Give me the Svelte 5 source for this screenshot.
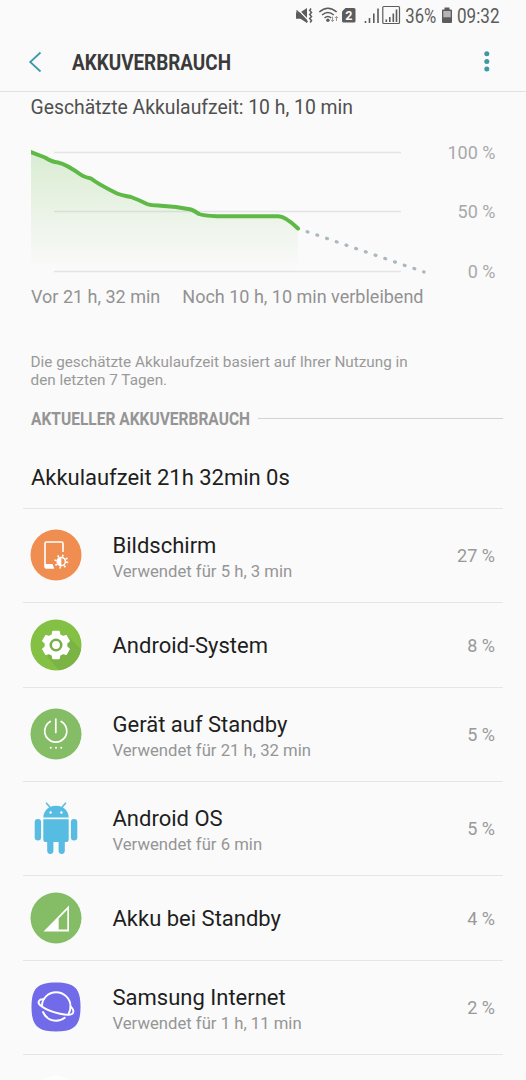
<script lang="ts">
    const CHART_LEFT = 30;
    const CHART_TOP = 22;

    const levels = [
        { label: '100 %', y: 22.5 },
        { label: '50 %', y: 81.5 },
        { label: '0 %', y: 141.5 }
    ];

    const history = 'M31 22 L45 27.5 Q52 32 58 32.5 Q66 34 82 45.5 Q86 47.5 91 48.5 Q98 54 116 63 Q120 65 131 67 Q139 70 147 74 Q151 75.5 158 75.5 L176 77 L191 79.5 Q194 80.5 199 84 Q203 85.5 217 86.3 L278 86.3 Q285 86 298 98.5';

    const apps = [
        { icon: 'display', name: 'Bildschirm', usage: 'Verwendet für 5 h, 3 min', percent: 27 },
        { icon: 'system', name: 'Android-System', usage: '', percent: 8 },
        { icon: 'power', name: 'Gerät auf Standby', usage: 'Verwendet für 21 h, 32 min', percent: 5 },
        { icon: 'android', name: 'Android OS', usage: 'Verwendet für 6 min', percent: 5 },
        { icon: 'signal', name: 'Akku bei Standby', usage: '', percent: 4 },
        { icon: 'internet', name: 'Samsung Internet', usage: 'Verwendet für 1 h, 11 min', percent: 2 }
    ];

    // six teeth, four outline points each
    function gearPoints(cx: number, cy: number, outer: number, inner: number) {
        const points: string[] = [];
        for (let i = 0; i < 6; i++) {
            const base = i * 60 - 90;
            for (const [offset, r] of [[-20, inner], [-13, outer], [13, outer], [20, inner]]) {
                const a = ((base + offset) * Math.PI) / 180;
                points.push(`${(cx + r * Math.cos(a)).toFixed(2)},${(cy + r * Math.sin(a)).toFixed(2)}`);
            }
        }
        return points.join(' ');
    }
</script>

<div class="screen">
    <div class="status-bar">
        <svg width="526" height="32" viewBox="0 0 526 32">
            <path d="M296 12.300h4.500l6.500-4.300v15l-6.500-4.300h-4.500z" fill="#5c5c5c" />
            <path d="M298 9.500l11 11.500" stroke="#fafafa" stroke-width="1.200" />
            <path d="M296.500 10.500l11 11.500" stroke="#5c5c5c" stroke-width="1.500" />
            <path d="M311 8.500l-1.300 2 1.800 2-1.800 2 1.800 2-1.800 2 1.800 2-1.300 2" fill="none" stroke="#5c5c5c" stroke-width="1.500" />
            <path d="M319.300 12Q327.900 4.500 336.700 12M322 15Q327.900 10 333.800 15M324.500 18Q327.900 15 331.200 18" fill="none" stroke="#5c5c5c" stroke-width="1.600" />
            <circle cx="327.900" cy="20.200" r="1.700" fill="#5c5c5c" />
            <path d="M332.500 16.500v5M330.800 19.800l1.700 1.700 1.700-1.700M336.500 21v-4.500M335 18l1.500-1.600 1.500 1.600" fill="none" stroke="#999" stroke-width="1" />
            <path d="M345.500 8H354q1.500 0 1.500 1.500v11.500q0 1.500-1.500 1.500h-10.500q-1.500 0-1.500-1.500v-9.500z" fill="#5c5c5c" />
            <text x="345.200" y="20" font-size="12.500" font-weight="700" fill="#fafafa">2</text>
            <path d="M365.500 21v2M369.500 18v5M373.800 13.500v9.500M378 8.500v14.500" stroke="#5c5c5c" stroke-width="1.600" />
            <rect x="382.800" y="6.500" width="16.700" height="17" rx="1" fill="none" stroke="#5c5c5c" stroke-width="1.200" />
            <path d="M386.300 19.500v2.500M389.800 17v5M393.300 13.500v8.500M396.500 9.500v12.500" stroke="#5c5c5c" stroke-width="1.600" />
            <text x="405.300" y="23" font-size="19.500" textLength="31" lengthAdjust="spacingAndGlyphs" fill="#5c5c5c">36%</text>
            <path d="M444.500 7.500h5v2h1.500q1 0 1 1v11.500q0 1-1 1h-8q-1 0-1-1v-11.500q0-1 1-1h1.500z" fill="#5c5c5c" />
            <path d="M443.300 11h7.400v6.300h-7.400z" fill="#b5b5b5" />
            <text x="457" y="23" font-size="19.500" textLength="42.500" lengthAdjust="spacingAndGlyphs" fill="#5c5c5c">09:32</text>
        </svg>
    </div>

    <header>
        <svg class="back" width="14" height="22" viewBox="0 0 14 22">
            <path d="M12.500 1.500L2.200 11l10.300 9.500" fill="none" stroke="#4198ad" stroke-width="1.800" />
        </svg>
        <svg class="title" width="230" height="30" viewBox="0 0 230 30" role="heading" aria-level="1">
            <text x="0" y="23" font-size="22" font-weight="700" textLength="159" lengthAdjust="spacingAndGlyphs" fill="#3a3a3a">AKKUVERBRAUCH</text>
        </svg>
        <svg class="more" width="6" height="22" viewBox="0 0 6 22">
            <g fill="#3f98a3">
                <circle cx="2.800" cy="2.700" r="2.500" />
                <circle cx="2.800" cy="10.400" r="2.500" />
                <circle cx="2.800" cy="18.100" r="2.500" />
            </g>
        </svg>
    </header>

    <section class="estimate">
        <p class="remaining">Geschätzte Akkulaufzeit: 10 h, 10 min</p>
        <svg class="chart" width="526" height="155" viewBox="0 0 526 155">
            <defs>
                <linearGradient id="fade" x1="0" y1={CHART_TOP} x2="0" y2="139" gradientUnits="userSpaceOnUse">
                    <stop offset="0" stop-color="#66bb44" stop-opacity="0.220" />
                    <stop offset="1" stop-color="#66bb44" stop-opacity="0" />
                </linearGradient>
                <clipPath id="plot"><rect x={CHART_LEFT + 1} y="0" width="400" height="155" /></clipPath>
            </defs>
            {#each levels as level}
                <path d="M54 {level.y}H401" stroke="#e4e4e4" stroke-width="1.300" />
                <text x="495.500" y={level.y + 6.5} text-anchor="end" font-size="18" fill="#a9a9a9">{level.label}</text>
            {/each}
            <path d="{history}V141H31Z" fill="url(#fade)" />
            <path d={history} fill="none" stroke="#5fb947" stroke-width="4" stroke-linecap="round" stroke-linejoin="round" clip-path="url(#plot)" />
            <path d="M307.200 101.700L424 142" stroke="#a9b9bf" stroke-width="3.300" stroke-linecap="round" stroke-dasharray="0.800 9.470" />
        </svg>
        <div class="range">
            <span class="past">Vor 21 h, 32 min</span>
            <span class="future">Noch 10 h, 10 min verbleibend</span>
        </div>
        <p class="hint">Die geschätzte Akkulaufzeit basiert auf Ihrer Nutzung in<br />den letzten 7 Tagen.</p>
    </section>

    <div class="section-title">
        <svg width="220" height="22" viewBox="0 0 220 22">
            <text x="0" y="17.500" font-size="17.500" font-weight="700" textLength="219" lengthAdjust="spacingAndGlyphs" fill="#959595">AKTUELLER AKKUVERBRAUCH</text>
        </svg>
        <div class="rule"></div>
    </div>

    <div class="runtime"><span>Akkulaufzeit 21h 32min 0s</span></div>

    <div class="list">
        {#each apps as app}
            <div class="row" class:single={!app.usage}>
                <svg class="icon" width="52" height="52" viewBox="0 0 52 52">
                    {#if app.icon === 'display'}
                        <circle cx="26" cy="26" r="25.500" fill="#f08d51" />
                        <path d="M33 23V14.500q0-1.500-1.500-1.500h-15q-1.500 0-1.500 1.500V37.500q0 1.500 1.500 1.500H24" fill="none" stroke="#fff" stroke-width="1.600" />
                        <path d="M15 35h7.500l1.500 4h-8q-1 0-1-1z" fill="#fff" />
                        <circle cx="31.300" cy="32.500" r="5.900" fill="none" stroke="#fff" stroke-width="2.200" stroke-dasharray="1.600 3.034" />
                        <circle cx="31.300" cy="32.500" r="4.100" fill="none" stroke="#fff" stroke-width="1.500" />
                        <path d="M31.300 28.400a4.100 4.100 0 0 0 0 8.200z" fill="#fff" />
                    {:else if app.icon === 'system'}
                        <circle cx="26" cy="26" r="25.500" fill="#83c044" />
                        <path d="M37.500 17L51 30.500A25.500 25.500 0 0 1 29 51.300L17 37.500z" fill="#7bb344" />
                        <polygon points={gearPoints(26, 26, 13.8, 10.8)} fill="#fff" stroke="#fff" stroke-width="1.400" stroke-linejoin="round" />
                        <circle cx="26" cy="26" r="5.200" fill="#fff" stroke="#78ae45" stroke-width="2.600" />
                    {:else if app.icon === 'power'}
                        <circle cx="26" cy="26" r="25.500" fill="#85bd66" />
                        <path d="M20.300 13.500A11 11 0 1 0 31.200 13.500M25.800 11v13.500" fill="none" stroke="#fff" stroke-width="1.700" stroke-linecap="round" />
                        <g fill="#fff">
                            <circle cx="20.800" cy="39.700" r="1" />
                            <circle cx="26" cy="39.700" r="1" />
                            <circle cx="31.200" cy="39.700" r="1" />
                        </g>
                    {:else if app.icon === 'android'}
                        <g fill="#56bce2">
                            <path d="M13.300 15.500C13.500 9 18 3.800 26 3.800S38.500 9 38.700 15.500z" />
                            <path d="M16.500 1.300l3.500 4M35.500 1.300l-3.500 4" stroke="#56bce2" stroke-width="1.600" stroke-linecap="round" />
                            <path d="M13.300 17.300h25.400v20.200q0 2.500-2.500 2.500H34.800v8.800a3.100 3.100 0 0 1-6.200 0V40h-5.200v8.800a3.100 3.100 0 0 1-6.200 0V40h-1.400q-2.500 0-2.500-2.500z" />
                            <rect x="4.700" y="17" width="6.400" height="21.500" rx="3.200" />
                            <rect x="40.900" y="17" width="6.400" height="21.500" rx="3.200" />
                        </g>
                        <circle cx="20.600" cy="10.500" r="1.200" fill="#fff" />
                        <circle cx="31.400" cy="10.500" r="1.200" fill="#fff" />
                    {:else if app.icon === 'signal'}
                        <circle cx="26" cy="26" r="25.500" fill="#85bd66" />
                        <path d="M13.500 39.500L39 13.500V39.500z" fill="#fff" />
                        <path d="M28.700 26.500L37.300 17.700V37.500H28.700z" fill="#85bd66" />
                    {:else}
                        <path d="M26 1.500C44.500 1.500 50.500 7.500 50.500 26S44.500 50.500 26 50.500 1.500 44.500 1.500 26 7.500 1.500 26 1.500z" fill="#716be9" />
                        <g fill="none" stroke="#fff" stroke-width="1.900" stroke-linecap="round" stroke-linejoin="round">
                            <path d="M12 24.500C12.300 17 18.500 11.300 26 11.300C34 11.300 40.500 17.500 40.500 25.500C40.500 28.500 39.800 31 38.300 33.500" />
                            <path d="M13.500 18.200C8.800 18 6.800 21.300 10.500 24.500C15 28.300 22 31 30 32.800C37.500 34.500 42.500 34.300 43.300 31.300C43.800 29.300 42.800 27.500 40.500 25.500" />
                            <path d="M13 31C15.500 36.500 20.500 39.700 26 39.700C29.500 39.700 32.500 38.700 34.800 36.800" />
                        </g>
                    {/if}
                </svg>
                <div class="info">
                    <div class="name">{app.name}</div>
                    {#if app.usage}
                        <div class="usage">{app.usage}</div>
                    {/if}
                </div>
                <div class="percent">{app.percent} %</div>
            </div>
        {/each}
    </div>
    <div class="next-row"><div class="next-icon"></div></div>
</div>

<style>
    :global(body) {
        background: #fafafa;
        overflow: hidden;
    }

    .screen {
        width: 526px;
        height: 1080px;
        overflow: hidden;
        background: #fafafa;
        font-family: Roboto, "Liberation Sans", sans-serif;
        color: #1e1e1e;
        display: flex;
        flex-direction: column;
    }

    .screen > * {
        flex: none;
    }

    svg {
        display: block;
        flex: none;
        overflow: visible;
    }

    p {
        margin: 0;
    }

    .status-bar {
        height: 32px;
    }

    header {
        height: 59px;
        display: flex;
        align-items: center;
        padding: 0 36px 0 28px;
        border-bottom: 1px solid #e2e2e2;
    }

    .title {
        margin-left: 30px;
    }

    .more {
        margin-left: auto;
    }

    .estimate {
        height: 310px;
        white-space: nowrap;
    }

    .remaining {
        height: 38px;
        padding-left: 30.5px;
        font-size: 19.35px;
        line-height: 31px;
        color: #505050;
    }

    .range {
        display: flex;
        gap: 22px;
        padding: 1px 0 0 31px;
        height: 67px;
        font-size: 18px;
        line-height: 22px;
        color: #929292;
    }

    .hint {
        padding-left: 30.5px;
        font-size: 15.3px;
        line-height: 18px;
        color: #999;
    }

    .section-title {
        display: flex;
        align-items: center;
        height: 32px;
        padding: 0 23px 0 31px;
    }

    .rule {
        flex: 1;
        margin-left: 7px;
        border-top: 1px solid #d3d3d3;
    }

    .runtime {
        height: 74px;
        padding: 0 8px;
        margin: 0 23px;
        line-height: 88px;
        font-size: 22px;
        letter-spacing: -0.02px;
        border-bottom: 1px solid #e5e5e5;
    }

    .row {
        display: flex;
        align-items: center;
        height: 92px;
        margin: 0 23px;
        padding: 0 8px 1px 7px;
        border-bottom: 1px solid #e5e5e5;
    }

    .row.single {
        height: 83px;
    }

    .info {
        flex: 1;
        margin-left: 30.5px;
        padding-top: 5px;
        white-space: nowrap;
    }

    .single .info {
        padding-top: 3px;
    }

    .name {
        font-size: 22px;
        line-height: 28px;
    }

    .usage {
        font-size: 16.7px;
        line-height: 24px;
        color: #959595;
    }

    .percent {
        padding-top: 1px;
        font-size: 18px;
        color: #999;
    }

    .next-row {
        padding: 21px 0 0 30px;
    }

    .next-icon {
        width: 52px;
        height: 52px;
        border-radius: 50%;
        background: #fff;
    }
</style>
